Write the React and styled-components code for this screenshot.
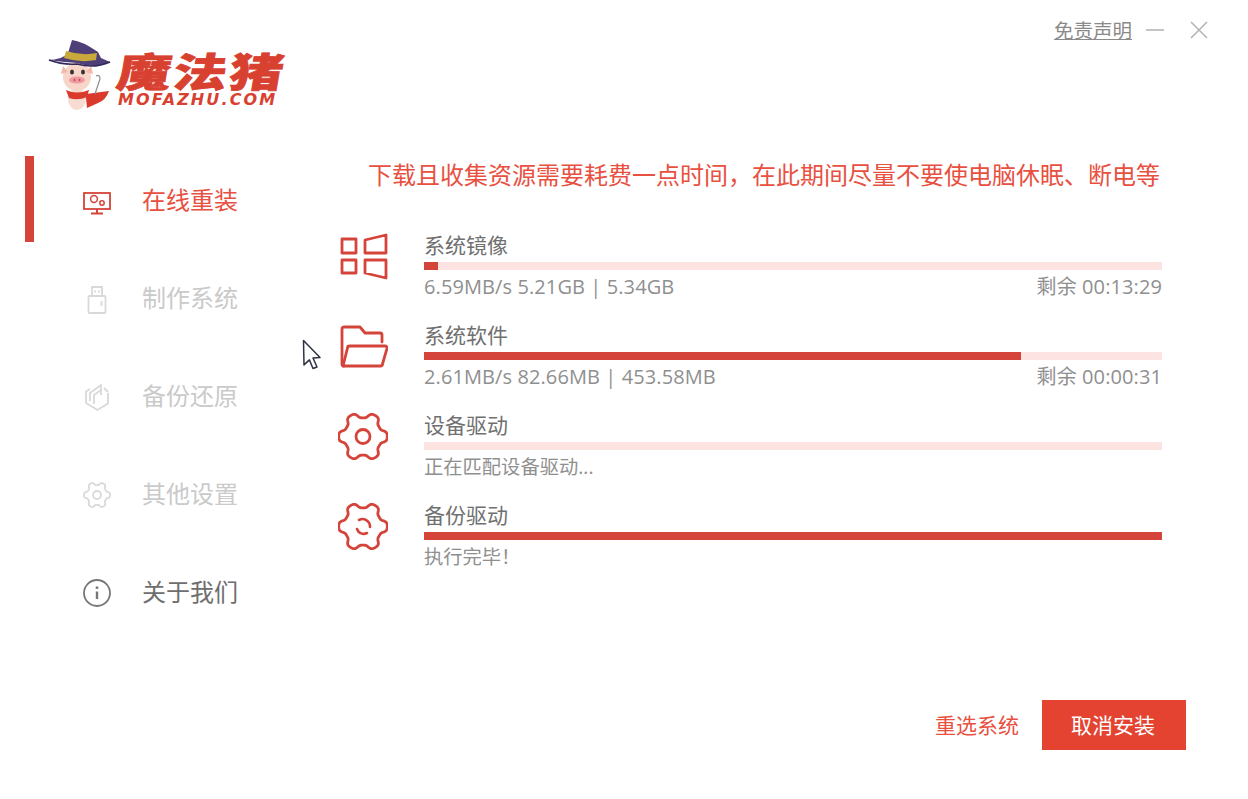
import React from 'react';
import styled, { createGlobalStyle } from 'styled-components';

const RED = '#d5443a';
const GREY = '#d9d9d9';

const GlobalStyle = createGlobalStyle`
  html, body {
    margin: 0;
    padding: 0;
    background: #fff;
  }
  body {
    font-family: "Open Sans", "Noto Sans CJK SC", sans-serif;
  }
`;

const Page = styled.div`
  position: relative;
  width: 1248px;
  height: 799px;
  overflow: hidden;
  background: #fff;
`;

const Header = styled.header`
  display: flex;
  justify-content: space-between;
  height: 152px;
  padding: 0 40px 0 46px;
  box-sizing: border-box;
`;

const Logo = styled.div`
  display: flex;
  gap: 4px;
  margin-top: 38px;
  height: 74px;
`;

const LogoText = styled.div`
  display: flex;
  flex-direction: column;
  margin-top: 11px;
`;

const LogoName = styled.div`
  font-family: "Noto Sans CJK SC", sans-serif;
  font-size: 54px;
  font-weight: 900;
  line-height: 41px;
  letter-spacing: 2px;
  color: #d8402f;
  -webkit-text-stroke: 1px #d8402f;
  transform: scaleY(0.74) skewX(-7deg);
`;

const LogoDomain = styled.div`
  margin-top: 2px;
  font-family: "DejaVu Sans", sans-serif;
  font-size: 16px;
  font-style: italic;
  font-weight: 700;
  line-height: 16px;
  letter-spacing: 2.1px;
  color: #d8402f;
`;

const WindowControls = styled.div`
  display: flex;
  align-items: center;
  gap: 14px;
  height: 24px;
  margin-top: 18px;
`;

const Disclaimer = styled.a`
  font-family: "Noto Sans CJK SC", sans-serif;
  font-size: 19.5px;
  line-height: 24px;
  color: #8a8a8a;
  text-decoration: underline;
`;

const ControlIcon = styled.svg`
  display: block;
  width: 18px;
  height: 18px;
  margin-left: ${p => p.$gap || 0}px;
  stroke: #b5b5b5;
  stroke-width: 1.6;
  fill: none;
`;

const Body = styled.div`
  display: flex;
`;

const Sidebar = styled.nav`
  width: 338px;
  padding-left: 25px;
  box-sizing: border-box;
`;

const NavItem = styled.div`
  display: flex;
  align-items: center;
  height: 98px;
`;

const Indicator = styled.span`
  width: 9px;
  height: 86px;
  margin-bottom: 4px;
  background: ${p => (p.$active ? RED : 'transparent')};
`;

const NavIcon = styled.svg`
  display: block;
  width: 30px;
  height: 30px;
  margin-left: 48px;
  fill: none;
  stroke: ${p => p.$color};
  stroke-width: 1.8;
`;

const NavLabel = styled.span`
  margin: 0 0 4px 30px;
  font-family: "Noto Sans CJK SC", sans-serif;
  font-size: 24px;
  line-height: 32px;
  color: ${p => p.$color};
`;

const Main = styled.main`
  width: 910px;
  padding-top: 5px;
`;

const Notice = styled.div`
  height: 34px;
  margin-bottom: 43px;
  padding-right: 88px;
  font-family: "Noto Sans CJK SC", sans-serif;
  font-size: 24px;
  line-height: 34px;
  text-align: right;
  color: #e8503f;
`;

const TaskRow = styled.div`
  display: flex;
  height: 90px;
  padding-right: 86px;
`;

const TaskIcon = styled.svg`
  display: block;
  flex: none;
  width: 50px;
  height: 50px;
  margin: -2px 36px 0 0;
  fill: none;
  stroke: ${RED};
  stroke-width: 2.8;
  stroke-linejoin: round;
  stroke-linecap: round;
`;

const TaskBody = styled.div`
  flex: 1;
`;

const TaskTitle = styled.div`
  height: 24px;
  margin: -2px 0 6px;
  font-family: "Noto Sans CJK SC", sans-serif;
  font-size: 21px;
  line-height: 24px;
  color: #707070;
`;

const Track = styled.div`
  height: 8px;
  margin-bottom: 5px;
  background: #fde4e2;
`;

const Fill = styled.div`
  height: 100%;
  width: ${p => p.$value}%;
  background: ${RED};
`;

const TaskStatus = styled.div`
  display: flex;
  justify-content: space-between;
  font-size: 20px;
  line-height: 24px;
  letter-spacing: 0.1px;
  color: #8f8f8f;
`;

const StatusMessage = styled.span`
  font-size: 19.3px;
  letter-spacing: 0;
`;

const Footer = styled.div`
  display: flex;
  justify-content: flex-end;
  align-items: center;
  gap: 23px;
  margin-top: 106px;
  padding-right: 62px;
`;

const ReselectLink = styled.a`
  margin-bottom: 2px;
  font-family: "Noto Sans CJK SC", sans-serif;
  font-size: 21px;
  color: #e8503f;
`;

const CancelButton = styled.button`
  width: 144px;
  height: 50px;
  border: none;
  background: #e44332;
  color: #fff;
  font-family: "Noto Sans CJK SC", sans-serif;
  font-size: 21px;
  padding: 0 2px 2px 0;
`;

const Pointer = styled.svg`
  position: absolute;
  left: 300px;
  top: 337px;
  width: 24px;
  height: 34px;
`;

// six-lobed outline shared by the gear icons
const gearPath = (cx, cy, radius, depth) => {
  const points = [];
  for (let i = 0; i < 180; i++) {
    const a = (i / 180) * Math.PI * 2;
    const r = radius + depth * (Math.tanh(1.8 * Math.cos(6 * a)) / Math.tanh(1.8));
    points.push(`${(cx + r * Math.cos(a)).toFixed(2)} ${(cy + r * Math.sin(a)).toFixed(2)}`);
  }
  return `M${points.join('L')}Z`;
};

const PigLogo = () => (
  <svg width="68" height="74" viewBox="44 38 68 74">
    <path d="M84 94 L107 91 Q104 100 96 103 L85 108 L84 98 Z" fill="#d93a2c" />
    <ellipse cx="75" cy="99" rx="9" ry="11" fill="#f8dcd2" />
    <path d="M64 90 Q75 95 87 90 L85 97 Q76 101 67 98 Z" fill="#d93a2c" />
    <path d="M94 76 Q98 74 98 79 L93 94" fill="none" stroke="#8d8d8d" strokeWidth="1.2" />
    <ellipse cx="75" cy="77" rx="14" ry="14" fill="#f7d5c9" />
    <path d="M61 66 L66 72 L59 74 Z M89 66 L84 72 L91 74 Z" fill="#f3b8aa" />
    <path d="M46 60 Q60 60 66 53 L70 40 Q80 41 96 52 L99 58 L108 62 Q92 69 75 63 Q60 62 46 60 Z" fill="#4f3f78" />
    <path d="M64 51 Q80 56 95 53 L94 60 Q78 63 62 58 Z" fill="#c9a93b" />
    <path d="M47 60 Q60 65 75 64 Q92 69 108 62" fill="none" stroke="#33285a" strokeWidth="1.5" />
    <ellipse cx="70" cy="72" rx="2" ry="2.6" fill="#3a3330" />
    <ellipse cx="81" cy="72" rx="2" ry="2.6" fill="#3a3330" />
    <ellipse cx="75" cy="80" rx="8" ry="3.6" fill="#f29aa0" />
    <ellipse cx="72.5" cy="80" rx="1" ry="1.2" fill="#b95a63" />
    <ellipse cx="77.5" cy="80" rx="1" ry="1.2" fill="#b95a63" />
  </svg>
);

const MonitorIcon = () => (
  <NavIcon $color={RED} viewBox="0 0 30 30">
    <rect x="2" y="7" width="26" height="16" />
    <path d="M15 23v4M9 27.5h12" strokeWidth="2" />
    <circle cx="12" cy="13" r="3.4" strokeWidth="1.5" />
    <circle cx="20" cy="17" r="2.2" strokeWidth="1.5" />
  </NavIcon>
);

const UsbIcon = () => (
  <NavIcon $color={GREY} viewBox="0 0 30 30">
    <rect x="6.5" y="12" width="17" height="17" rx="1" />
    <path d="M10 12V3h10v9M19.5 17v5M13 6.5v2M17 6.5v2" />
  </NavIcon>
);

const RestoreIcon = () => (
  <NavIcon $color={GREY} viewBox="0 0 30 30">
    <path d="M8 7 L4 9.5 V21 L15.5 28 L26 21.5 V11" />
    <path d="M8 19 V11 L15 6 L19 3 V8 M12 22 V13 L19 8 V13 M22 6 L26 10" />
  </NavIcon>
);

const SmallGearIcon = () => (
  <NavIcon $color={GREY} viewBox="0 0 30 30">
    <path d={gearPath(15, 15, 11.5, 1.6)} />
    <circle cx="15" cy="15" r="4" />
  </NavIcon>
);

const InfoIcon = () => (
  <NavIcon $color="#777" viewBox="0 0 30 30">
    <circle cx="15" cy="15" r="13" />
    <path d="M15 13.5v7.5" strokeWidth="2.4" />
    <path d="M15 8.5v2.4" strokeWidth="2.6" />
  </NavIcon>
);

const WindowsIcon = () => (
  <TaskIcon viewBox="0 0 50 50">
    <path d="M4 7h14v14H4zM4 28h14v13H4z" />
    <path d="M27 8 48 3v18H27zM27 28h21v18l-21-5z" />
  </TaskIcon>
);

const FolderIcon = () => (
  <TaskIcon viewBox="0 0 50 50">
    <path d="M44 20v-7a2 2 0 0 0-2-2H27l-5-6H6a2 2 0 0 0-2 2v35a2 2 0 0 0 2 2" />
    <path d="M5 44 9.5 26a2 2 0 0 1 2-2H47a2 2 0 0 1 2 2.4L44.5 42a2 2 0 0 1-2 2Z" />
  </TaskIcon>
);

const DriverIcon = () => (
  <TaskIcon viewBox="0 0 50 50">
    <path d={gearPath(25, 24.5, 21.5, 2.8)} />
    <circle cx="25" cy="24.5" r="7" strokeWidth="2.8" />
  </TaskIcon>
);

const BackupIcon = () => (
  <TaskIcon viewBox="0 0 50 50">
    <path d={gearPath(25, 24.5, 21.5, 2.8)} />
    <path d="M19 27a7 7 0 0 0 10 4M21 18a7.5 7.5 0 0 1 11 7" strokeWidth="2.6" />
  </TaskIcon>
);

const navItems = [
  { label: '在线重装', color: '#e8503f', icon: <MonitorIcon />, active: true },
  { label: '制作系统', color: '#cacaca', icon: <UsbIcon /> },
  { label: '备份还原', color: '#cacaca', icon: <RestoreIcon /> },
  { label: '其他设置', color: '#cacaca', icon: <SmallGearIcon /> },
  { label: '关于我们', color: '#6e6e6e', icon: <InfoIcon /> },
];

const tasks = [
  { title: '系统镜像', icon: <WindowsIcon />, value: 1.9, status: '6.59MB/s 5.21GB | 5.34GB', left: '剩余 00:13:29' },
  { title: '系统软件', icon: <FolderIcon />, value: 80.9, status: '2.61MB/s 82.66MB | 453.58MB', left: '剩余 00:00:31' },
  { title: '设备驱动', icon: <DriverIcon />, value: 0, message: '正在匹配设备驱动...' },
  { title: '备份驱动', icon: <BackupIcon />, value: 100, message: '执行完毕！' },
];

const App = () => {
  return (
    <Page>
      <GlobalStyle />
      <Header>
        <Logo>
          <PigLogo />
          <LogoText>
            <LogoName>魔法猪</LogoName>
            <LogoDomain>MOFAZHU.COM</LogoDomain>
          </LogoText>
        </Logo>
        <WindowControls>
          <Disclaimer>免责声明</Disclaimer>
          <ControlIcon viewBox="0 0 18 18">
            <path d="M0 9h18" />
          </ControlIcon>
          <ControlIcon $gap={12} viewBox="0 0 18 18">
            <path d="M1 1l16 16M17 1 1 17" />
          </ControlIcon>
        </WindowControls>
      </Header>

      <Body>
        <Sidebar>
          {navItems.map(item => (
            <NavItem key={item.label}>
              <Indicator $active={item.active} />
              {item.icon}
              <NavLabel $color={item.color}>{item.label}</NavLabel>
            </NavItem>
          ))}
        </Sidebar>

        <Main>
          <Notice>下载且收集资源需要耗费一点时间，在此期间尽量不要使电脑休眠、断电等</Notice>
          {tasks.map(task => (
            <TaskRow key={task.title}>
              {task.icon}
              <TaskBody>
                <TaskTitle>{task.title}</TaskTitle>
                <Track>
                  <Fill $value={task.value} />
                </Track>
                <TaskStatus>
                  {task.message ? <StatusMessage>{task.message}</StatusMessage> : <span>{task.status}</span>}
                  {task.left && <span>{task.left}</span>}
                </TaskStatus>
              </TaskBody>
            </TaskRow>
          ))}
          <Footer>
            <ReselectLink>重选系统</ReselectLink>
            <CancelButton>取消安装</CancelButton>
          </Footer>
        </Main>
      </Body>

      <Pointer viewBox="0 0 24 34">
        <path
          d="M3.5 3.5 20 20.5l-7 .5 4 9-4 1.5-3.6-8.6-5.4 5Z"
          fill="#fff"
          stroke="#2d3244"
          strokeWidth="1.5"
          strokeLinejoin="round"
        />
      </Pointer>
    </Page>
  );
};

export default App;
